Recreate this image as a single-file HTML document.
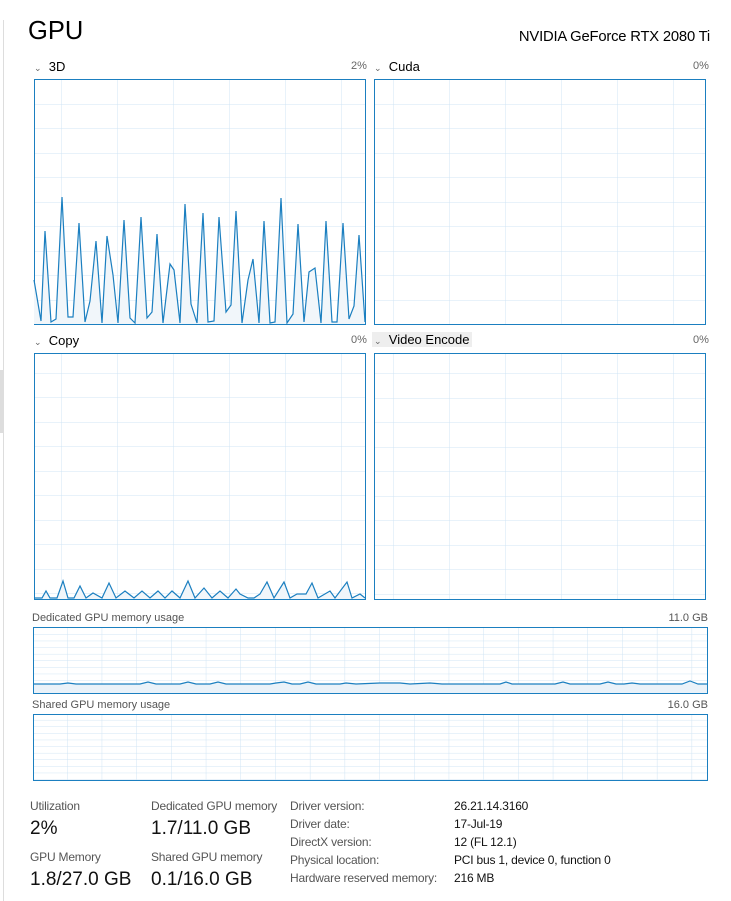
<!DOCTYPE html>
<html><head><meta charset="utf-8"><style>
body{margin:0;width:731px;height:901px;background:#fff;overflow:hidden;font-family:"Liberation Sans",sans-serif;position:relative}
.t{position:absolute;white-space:nowrap}
.lab{font-size:12px;color:#555;letter-spacing:-0.2px}
.val{font-size:19px;color:#111}
.k{font-size:12px;color:#555;letter-spacing:-0.2px}
.v{font-size:12px;color:#111;letter-spacing:-0.2px}
</style></head><body>
<div style="position:absolute;left:3px;top:20px;width:1px;height:881px;background:#ddd"></div>
<div style="position:absolute;left:0;top:370px;width:4px;height:63px;background:#ddd"></div>
<div class="t" style="left:28px;top:17px;font-size:25.5px;color:#000">GPU</div>
<div class="t" style="right:21px;top:29px;font-size:14.8px;color:#000;letter-spacing:-0.2px">NVIDIA GeForce RTX 2080 Ti</div>

<div class="t" style="left:34px;top:59px;font-size:13px;color:#000"><span style="font-size:9px;color:#666">&#8964;</span>&nbsp; 3D</div>
<div class="t" style="left:351px;top:60px;font-size:11px;color:#666">2%</div>
<div class="t" style="left:374px;top:59px;font-size:13px;color:#000"><span style="font-size:9px;color:#666">&#8964;</span>&nbsp; Cuda</div>
<div class="t" style="left:693px;top:60px;font-size:11px;color:#666">0%</div>
<div class="t" style="left:34px;top:333px;font-size:13px;color:#000"><span style="font-size:9px;color:#666">&#8964;</span>&nbsp; Copy</div>
<div class="t" style="left:351px;top:334px;font-size:11px;color:#666">0%</div>
<div class="t" style="left:372px;top:332px;font-size:13px;color:#000;background:#eee;padding:0 2px"><span style="font-size:9px;color:#666">&#8964;</span>&nbsp; Video Encode</div>
<div class="t" style="left:693px;top:334px;font-size:11px;color:#666">0%</div>
<div class="t" style="left:32px;top:612px;font-size:11px;color:#555">Dedicated GPU memory usage</div>
<div class="t" style="right:23px;top:612px;font-size:11px;color:#555">11.0 GB</div>
<div class="t" style="left:32px;top:699px;font-size:11px;color:#555">Shared GPU memory usage</div>
<div class="t" style="right:23px;top:699px;font-size:11px;color:#555">16.0 GB</div>

<svg width="731" height="901" style="position:absolute;left:0;top:0">
<defs>
<pattern id="g1" patternUnits="userSpaceOnUse" x="6" y="6.5" width="56" height="24.5"><path d="M56 0V24.5M0 24.5H56" stroke="#d0e4f4" stroke-width="1" fill="none"/></pattern>
<pattern id="g2" patternUnits="userSpaceOnUse" x="2" y="6.5" width="56" height="24.5"><path d="M56 0V24.5M0 24.5H56" stroke="#d0e4f4" stroke-width="1" fill="none"/></pattern>
<pattern id="g3" patternUnits="userSpaceOnUse" x="6" y="6" width="56" height="24.5"><path d="M56 0V24.5M0 24.5H56" stroke="#d0e4f4" stroke-width="1" fill="none"/></pattern>
<pattern id="g4" patternUnits="userSpaceOnUse" x="32.8" y="1" width="34.7" height="6.6"><path d="M34.7 0V6.6M0 6.6H34.7" stroke="#d0e4f4" stroke-width="1" fill="none"/></pattern>
</defs>
<rect x="34.5" y="79.5" width="331" height="245" fill="url(#g1)" stroke="#1b7fc0"/>
<rect x="374.5" y="79.5" width="331" height="245" fill="url(#g2)" stroke="#1b7fc0"/>
<rect x="34.5" y="353.5" width="331" height="246" fill="url(#g3)" stroke="#1b7fc0"/>
<rect x="374.5" y="353.5" width="331" height="246" fill="url(#g2)" stroke="#1b7fc0"/>
<rect x="33.5" y="627.5" width="674" height="66" fill="url(#g4)" stroke="#1b7fc0"/>
<rect x="33.5" y="714.5" width="674" height="66" fill="url(#g4)" stroke="#1b7fc0"/>

<polygon fill="#f1f6fa" stroke="none" points="34,324 34,280 41,321 45,231 51,322 56,319 62,197 68,317 73,317 79,223 85,322 90,301 96,241 102,323 107,236 113,275 118,323 124,220 130,318 135,323 141,217 147,318 152,312 157,234 163,323 170,264 174,270 180,323 185,204 191,304 197,323 203,213 208,322 214,321 219,217 226,312 231,305 236,211 242,323 248,280 253,259 259,323 264,221 270,323 275,322 281,198 287,323 293,314 298,224 304,322 309,272 315,268 321,323 326,221 332,322 337,322 343,223 349,319 354,306 359,235 365,322 365,324"/>
<polyline fill="none" stroke="#1b7fc0" stroke-width="1.2" points="34,280 41,321 45,231 51,322 56,319 62,197 68,317 73,317 79,223 85,322 90,301 96,241 102,323 107,236 113,275 118,323 124,220 130,318 135,323 141,217 147,318 152,312 157,234 163,323 170,264 174,270 180,323 185,204 191,304 197,323 203,213 208,322 214,321 219,217 226,312 231,305 236,211 242,323 248,280 253,259 259,323 264,221 270,323 275,322 281,198 287,323 293,314 298,224 304,322 309,272 315,268 321,323 326,221 332,322 337,322 343,223 349,319 354,306 359,235 365,322"/>

<polygon fill="#f1f6fa" points="35,599 35,598 42,598 46,591 50,598 57,598 63,581 68,598 74,598 80,586 86,598 93,593 102,598 109,583 116,598 125,591 134,598 142,591 150,598 158,591 165,598 172,591 180,598 188,581 195,598 204,588 212,598 220,591 228,598 236,589 240,594 248,598 254,598 260,594 267,582 274,598 284,582 290,598 297,594 306,594 312,583 318,598 330,591 335,598 347,582 352,598 360,594 365,598 365,599"/>
<polyline fill="none" stroke="#1b7fc0" stroke-width="1.2" points="35,598 42,598 46,591 50,598 57,598 63,581 68,598 74,598 80,586 86,598 93,593 102,598 109,583 116,598 125,591 134,598 142,591 150,598 158,591 165,598 172,591 180,598 188,581 195,598 204,588 212,598 220,591 228,598 236,589 240,594 248,598 254,598 260,594 267,582 274,598 284,582 290,598 297,594 306,594 312,583 318,598 330,591 335,598 347,582 352,598 360,594 365,598"/>

<polygon fill="#eaf2f9" points="34,693 34,684 60,684 68,683 76,684 140,684 148,682 156,684 180,684 188,682 196,684 210,684 218,682 226,684 270,684 276,683 284,682 292,684 300,684 308,682 316,684 340,684 346,683 356,684 380,683 400,683 410,684 430,683 442,684 500,684 506,682 512,684 555,684 563,682 570,684 600,684 608,682 616,684 624,684 632,683 640,684 682,684 690,681 698,684 707,684 707,693"/>
<polyline fill="none" stroke="#1b7fc0" stroke-width="1.2" points="34,684 60,684 68,683 76,684 140,684 148,682 156,684 180,684 188,682 196,684 210,684 218,682 226,684 270,684 276,683 284,682 292,684 300,684 308,682 316,684 340,684 346,683 356,684 380,683 400,683 410,684 430,683 442,684 500,684 506,682 512,684 555,684 563,682 570,684 600,684 608,682 616,684 624,684 632,683 640,684 682,684 690,681 698,684 707,684"/>
</svg>

<div class="t lab" style="left:30px;top:799px">Utilization</div>
<div class="t val" style="left:30px;top:818px">2%</div>
<div class="t lab" style="left:30px;top:850px">GPU Memory</div>
<div class="t val" style="left:30px;top:869px">1.8/27.0 GB</div>
<div class="t lab" style="left:151px;top:799px">Dedicated GPU memory</div>
<div class="t val" style="left:151px;top:818px">1.7/11.0 GB</div>
<div class="t lab" style="left:151px;top:850px">Shared GPU memory</div>
<div class="t val" style="left:151px;top:869px">0.1/16.0 GB</div>

<div class="t k" style="left:290px;top:799px">Driver version:</div>
<div class="t k" style="left:290px;top:817px">Driver date:</div>
<div class="t k" style="left:290px;top:835px">DirectX version:</div>
<div class="t k" style="left:290px;top:853px">Physical location:</div>
<div class="t k" style="left:290px;top:871px">Hardware reserved memory:</div>
<div class="t v" style="left:454px;top:799px">26.21.14.3160</div>
<div class="t v" style="left:454px;top:817px">17-Jul-19</div>
<div class="t v" style="left:454px;top:835px">12 (FL 12.1)</div>
<div class="t v" style="left:454px;top:853px">PCI bus 1, device 0, function 0</div>
<div class="t v" style="left:454px;top:871px">216 MB</div>
</body></html>
